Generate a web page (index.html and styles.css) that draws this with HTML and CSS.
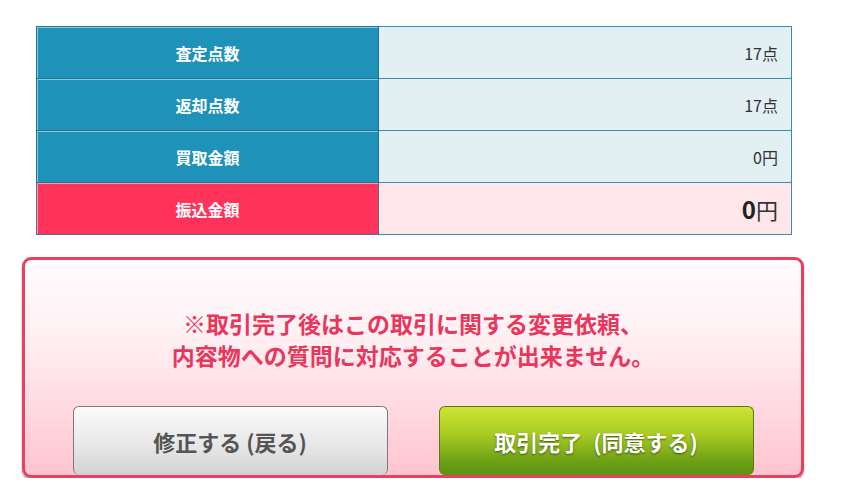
FILE: index.html
```html
<!DOCTYPE html>
<html lang="ja">
<head>
<meta charset="utf-8">
<link rel="stylesheet" href="styles.css">
</head>
<body>
<div class="page">
  <table class="summary">
    <tr><th>査定点数</th><td>17点</td></tr>
    <tr><th>返却点数</th><td>17点</td></tr>
    <tr><th>買取金額</th><td>0円</td></tr>
    <tr class="total"><th>振込金額</th><td><b>0</b>円</td></tr>
  </table>
  <div class="confirm">
    <p class="notice">※取引完了後はこの取引に関する変更依頼、<br>内容物への質問に対応することが出来ません。</p>
    <div class="buttons">
      <button class="btn btn-back">修正する (戻る)</button>
      <button class="btn btn-ok">取引完了&ensp;(同意する)</button>
    </div>
  </div>
</div>
</body>
</html>
```
FILE: styles.css
```css
html, body {
  margin: 0;
  padding: 0;
  background: #fff;
}
body {
  font-family: "Noto Sans CJK JP", "Noto Sans", sans-serif;
}
.page {
  padding: 26px 0 0 22px;
  width: 782px;
}
.summary {
  margin-left: 14px;
  width: 756px;
  border-collapse: collapse;
  border: 1px solid #3a8db0;
}
.summary th {
  width: 341px;
  height: 51px;
  padding: 0;
  background: #1f92b9;
  color: #fff;
  font-size: 16px;
  font-weight: bold;
  border: 1px solid #2b6f8c;
  box-shadow: inset 1px 1px 0 #7ccfe6;
}
.summary td {
  height: 51px;
  padding: 0 13px 0 0;
  text-align: right;
  background: #e2f0f4;
  color: #333;
  font-size: 16px;
  border: 1px solid #3a8db0;
}
.summary .total th {
  background: #ff3259;
  border-color: #5a6b86;
  box-shadow: inset 1px 1px 0 #ff9aaf;
}
.summary .total td {
  background: #ffe6ea;
  font-size: 22px;
}
.summary .total td b {
  font-size: 24px;
  color: #222;
}
.confirm {
  margin-top: 22px;
  border: 3px solid #e9405f;
  border-radius: 9px;
  background: linear-gradient(to bottom, #fffcfd 0%, #ffeef2 40%, #ffc4cf 100%);
  box-shadow: 0 2px 2px rgba(0,0,0,0.35);
  padding: 47px 0 0;
}
.notice {
  margin: 0;
  text-align: center;
  color: #e8375c;
  font-size: 23px;
  font-weight: bold;
  line-height: 32px;
}
.buttons {
  margin-top: 35px;
  display: flex;
  justify-content: center;
  gap: 51px;
}
.btn {
  width: 315px;
  height: 69px;
  border-radius: 6px;
  font-family: "Noto Sans CJK JP", "Noto Sans", sans-serif;
  font-size: 22px;
  font-weight: bold;
  padding: 0;
  cursor: pointer;
}
.btn-back {
  border: 1px solid #7a7a7a;
  border-bottom: 0;
  background: linear-gradient(to bottom, #fafafa 0%, #e6e6e6 60%, #d2d2d2 100%);
  color: #555;
  box-shadow: inset 0 1px 0 #fff;
}
.btn-ok {
  border: 1px solid #5b7b12;
  border-bottom: 0;
  background: linear-gradient(to bottom, #cde534 0%, #a9cb22 40%, #6da015 80%, #5b9310 100%);
  color: #fff;
  text-shadow: 0 1px 2px rgba(0,0,0,0.55);
}
```
